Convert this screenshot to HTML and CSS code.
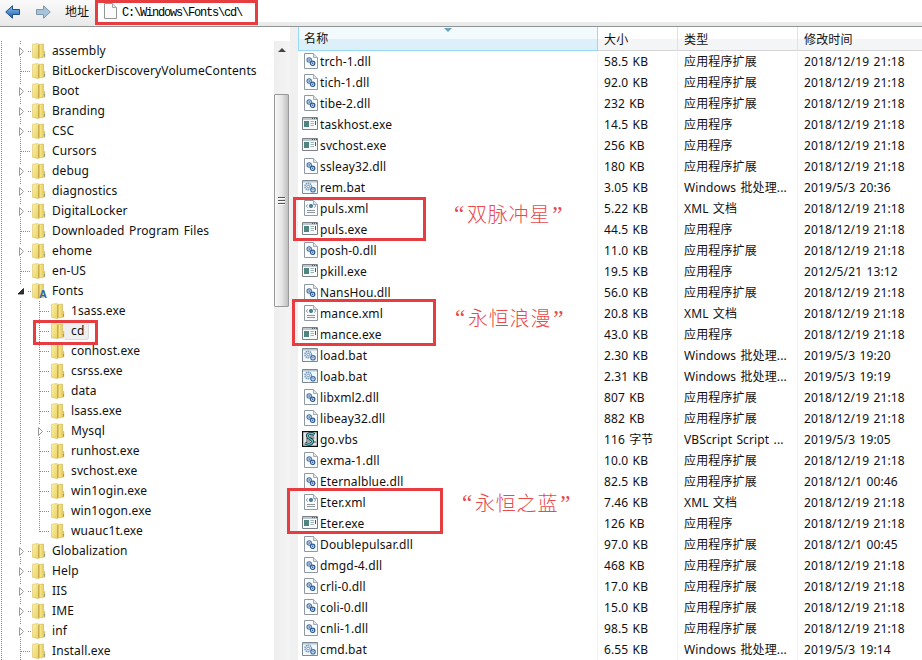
FILE: index.html
```html
<!DOCTYPE html>
<html lang="zh-CN">
<head>
<meta charset="utf-8">
<title>C:\Windows\Fonts\cd\</title>
<link rel="stylesheet" href="styles.css">
</head>
<body>
<svg class="defs" width="0" height="0">
  <defs>
    <linearGradient id="gold" x1="0" x2="1" y1="0" y2="0"><stop offset="0" stop-color="#d9bb52"/><stop offset=".35" stop-color="#f5e485"/><stop offset="1" stop-color="#dfc055"/></linearGradient>
    <linearGradient id="pale" x1="0" x2="1" y1="0" y2="1"><stop offset="0" stop-color="#fbf2a8"/><stop offset="1" stop-color="#e8cf60"/></linearGradient>
    <linearGradient id="blue" x1="0" x2="0" y1="0" y2="1"><stop offset="0" stop-color="#8cc0ee"/><stop offset="1" stop-color="#1c5fae"/></linearGradient>
    <symbol id="folder" viewBox="0 0 14 16"><path d="M6 1.500 11.500 1v6.500l1.300 1v5.500L6 15.300z" fill="url(#gold)" stroke="#cbae48" stroke-width=".5"/><path d="M.5 1.300 5.800.5l1.200 1v13.300l-1.500.7L.5 14.300z" fill="url(#pale)" stroke="#d3bb58" stroke-width=".5"/><path d="M6.700 2v12.800" stroke="#b99a3c" stroke-width=".8"/><path d="M12.500 11v2.500" stroke="#6f93ad" stroke-width=".8"/></symbol>
    <symbol id="dll" viewBox="0 0 14 16"><path d="M.5.500h9l4 4v11H.500z" fill="#fafcfd" stroke="#9099a1"/><path d="M9.500.500v4h4" fill="#dfe5e9" stroke="#a3adb5"/><circle cx="5.200" cy="7" r="2.200" fill="#d5e4f3" stroke="#4a719f" stroke-width="1.100"/><circle cx="5.200" cy="7" r=".8" fill="#315a90"/><circle cx="8.600" cy="10.300" r="2.200" fill="#d5e4f3" stroke="#2c5b96" stroke-width="1.200"/><circle cx="8.600" cy="10.300" r=".8" fill="#2c5b96"/></symbol>
    <symbol id="exe" viewBox="0 0 16 14"><path d="M.5.500h15v12H.500z" fill="#f8fafa" stroke="#7b8186"/><path d="M1 1h14v2H1z" fill="#bcc6cc"/><path d="M10 1.500h1m1 0h1m1 0h1" stroke="#4b5963"/><path d="M2 4h5v6H2z" fill="#4f8580"/><path d="M8.500 4.500H12M8.500 6.500H12M8.500 8.500H12" stroke="#9fb3b8"/><path d="M13.500 4v4" stroke="#3f5a66"/></symbol>
    <symbol id="bat" viewBox="0 0 16 14"><path d="M.5.500h15v13H.500z" fill="#f1f7fb" stroke="#7d8992"/><path d="M1 1h14v1.500H1z" fill="#b9c6cf"/><circle cx="6.200" cy="6.500" r="3.300" fill="#e2edf7" stroke="#6c94bd" stroke-width="1.300" stroke-dasharray="1.500 .6"/><circle cx="6.200" cy="6.500" r="1.400" fill="#fff" stroke="#6c94bd"/><circle cx="11" cy="9.800" r="2.200" fill="#e5eef7" stroke="#3f6fa3" stroke-width="1.200"/><circle cx="11" cy="9.800" r=".7" fill="#3f6fa3"/></symbol>
    <symbol id="xml" viewBox="0 0 14 16"><path d="M.5.500h9l4 4v11H.500z" fill="#fafcfd" stroke="#9099a1"/><path d="M9.500.500v4h4" fill="#dfe5e9" stroke="#a3adb5"/><path d="M3.800 4.500 2.200 6l1.600 1.500M10.200 4.500 11.800 6l-1.600 1.500" fill="none" stroke="#7d929f"/><circle cx="7" cy="6" r="2" fill="#336c8a"/><circle cx="7" cy="6" r=".6" fill="#9fd3ce"/><path d="M3 10.500h8M3 12.500h8" stroke="#8c969c"/></symbol>
    <symbol id="vbs" viewBox="0 0 16 16"><path d="M.6.600h14.800v14.800H.600z" fill="#e3e7e8" stroke="#111" stroke-width="1.200"/><path d="M5 2.500h8l-2 4 1 7H3.500l2-3.500z" fill="#f6f6f6"/><path d="M12.500 3.500C9 1.500 5 2.500 5.500 5.300S11.500 8 10.500 11 5.500 13.500 3 12" fill="none" stroke="#102f38" stroke-width="3"/><path d="M12.500 3.500C9 1.500 5 2.500 5.500 5.300S11.500 8 10.500 11 5.500 13.500 3 12" fill="none" stroke="#5cc3c9" stroke-width="1.400"/><path d="M8 5h4M8.500 7h4M4 10h4M12 11h2M4 8h2" stroke="#222" stroke-width=".8"/></symbol>
    <symbol id="leaf" viewBox="0 0 32 20"><path d="M20.500 0v20M21 10.500h10" class="dots"/></symbol>
    <symbol id="end" viewBox="0 0 32 20"><path d="M20.500 0v11M21 10.500h10" class="dots"/></symbol>
    <symbol id="shut" viewBox="0 0 32 20"><path d="M20.500 0v4M20.500 16v4M28 10.500h4" class="dots"/><path d="M19.500 6.500v8l4-4z" fill="#fff" stroke="#999"/></symbol>
    <symbol id="open" viewBox="0 0 32 20"><path d="M20.500 0v4M28 10.500h4" class="dots"/><path d="M23.500 7.500v5.500H18z" fill="#333" stroke="#111" stroke-width=".8"/></symbol>
  </defs>
</svg>

<header class="toolbar">
  <svg class="nav" width="16" height="14" viewBox="0 0 16 14"><path d="M7.500.800v3.700h7v5h-7v3.700L.700 7z" fill="url(#blue)" stroke="#1d4f8c"/></svg>
  <svg class="nav forward" width="16" height="14" viewBox="0 0 16 14"><path d="M8.500.800v3.700h-7v5h7v3.700L15.300 7z" fill="#a6c3dc" stroke="#8097ad"/></svg>
  <span class="caption">地址</span>
  <div class="address">
    <svg width="13" height="16" viewBox="0 0 13 16"><path d="M.5.500h8l4 4v11H.500z" fill="#fbfbfb" stroke="#969696"/><path d="M8.500.500v4h4" fill="#e5e5e5" stroke="#a5a5a5"/></svg>
    <span>C:\Windows\Fonts\cd\</span>
  </div>
</header>

<main class="panes">
  <nav class="tree">
    <ul>
      <li><svg class="g"><use href="#shut"/></svg><svg class="f"><use href="#folder"/></svg><span>assembly</span></li>
      <li><svg class="g"><use href="#leaf"/></svg><svg class="f"><use href="#folder"/></svg><span>BitLockerDiscoveryVolumeContents</span></li>
      <li><svg class="g"><use href="#shut"/></svg><svg class="f"><use href="#folder"/></svg><span>Boot</span></li>
      <li><svg class="g"><use href="#shut"/></svg><svg class="f"><use href="#folder"/></svg><span>Branding</span></li>
      <li><svg class="g"><use href="#shut"/></svg><svg class="f"><use href="#folder"/></svg><span>CSC</span></li>
      <li><svg class="g"><use href="#leaf"/></svg><svg class="f"><use href="#folder"/></svg><span>Cursors</span></li>
      <li><svg class="g"><use href="#shut"/></svg><svg class="f"><use href="#folder"/></svg><span>debug</span></li>
      <li><svg class="g"><use href="#shut"/></svg><svg class="f"><use href="#folder"/></svg><span>diagnostics</span></li>
      <li><svg class="g"><use href="#shut"/></svg><svg class="f"><use href="#folder"/></svg><span>DigitalLocker</span></li>
      <li><svg class="g"><use href="#leaf"/></svg><svg class="f"><use href="#folder"/></svg><span>Downloaded Program Files</span></li>
      <li><svg class="g"><use href="#shut"/></svg><svg class="f"><use href="#folder"/></svg><span>ehome</span></li>
      <li><svg class="g"><use href="#leaf"/></svg><svg class="f"><use href="#folder"/></svg><span>en-US</span></li>
      <li class="fonts"><svg class="g"><use href="#open"/></svg><svg class="f"><use href="#folder"/></svg><b class="mark">A</b><span>Fonts</span>
        <ul>
          <li><svg class="g"><use href="#leaf"/></svg><svg class="f"><use href="#folder"/></svg><span>1sass.exe</span></li>
          <li class="selected"><svg class="g"><use href="#leaf"/></svg><svg class="f"><use href="#folder"/></svg><span>cd</span></li>
          <li><svg class="g"><use href="#leaf"/></svg><svg class="f"><use href="#folder"/></svg><span>conhost.exe</span></li>
          <li><svg class="g"><use href="#leaf"/></svg><svg class="f"><use href="#folder"/></svg><span>csrss.exe</span></li>
          <li><svg class="g"><use href="#leaf"/></svg><svg class="f"><use href="#folder"/></svg><span>data</span></li>
          <li><svg class="g"><use href="#leaf"/></svg><svg class="f"><use href="#folder"/></svg><span>lsass.exe</span></li>
          <li><svg class="g"><use href="#shut"/></svg><svg class="f"><use href="#folder"/></svg><span>Mysql</span></li>
          <li><svg class="g"><use href="#leaf"/></svg><svg class="f"><use href="#folder"/></svg><span>runhost.exe</span></li>
          <li><svg class="g"><use href="#leaf"/></svg><svg class="f"><use href="#folder"/></svg><span>svchost.exe</span></li>
          <li><svg class="g"><use href="#leaf"/></svg><svg class="f"><use href="#folder"/></svg><span>win1ogin.exe</span></li>
          <li><svg class="g"><use href="#leaf"/></svg><svg class="f"><use href="#folder"/></svg><span>win1ogon.exe</span></li>
          <li><svg class="g"><use href="#end"/></svg><svg class="f"><use href="#folder"/></svg><span>wuauc1t.exe</span></li>
        </ul>
      </li>
      <li><svg class="g"><use href="#shut"/></svg><svg class="f"><use href="#folder"/></svg><span>Globalization</span></li>
      <li><svg class="g"><use href="#shut"/></svg><svg class="f"><use href="#folder"/></svg><span>Help</span></li>
      <li><svg class="g"><use href="#shut"/></svg><svg class="f"><use href="#folder"/></svg><span>IIS</span></li>
      <li><svg class="g"><use href="#shut"/></svg><svg class="f"><use href="#folder"/></svg><span>IME</span></li>
      <li><svg class="g"><use href="#shut"/></svg><svg class="f"><use href="#folder"/></svg><span>inf</span></li>
      <li><svg class="g"><use href="#leaf"/></svg><svg class="f"><use href="#folder"/></svg><span>Install.exe</span></li>
    </ul>
  </nav>
  <div class="scrollbar"><i class="up"></i><div class="thumb"><i></i><i></i><i></i></div></div>
  <div class="splitter"></div>
  <section class="list">
    <div class="row head"><div class="sorted">名称</div><div>大小</div><div>类型</div><div>修改时间</div></div>
    <div class="row"><div><svg class="doc"><use href="#dll"/></svg>trch-1.dll</div><div>58.5 KB</div><div>应用程序扩展</div><div>2018/12/19 21:18</div></div>
    <div class="row"><div><svg class="doc"><use href="#dll"/></svg>tich-1.dll</div><div>92.0 KB</div><div>应用程序扩展</div><div>2018/12/19 21:18</div></div>
    <div class="row"><div><svg class="doc"><use href="#dll"/></svg>tibe-2.dll</div><div>232 KB</div><div>应用程序扩展</div><div>2018/12/19 21:18</div></div>
    <div class="row"><div><svg class="win"><use href="#exe"/></svg>taskhost.exe</div><div>14.5 KB</div><div>应用程序</div><div>2018/12/19 21:18</div></div>
    <div class="row"><div><svg class="win"><use href="#exe"/></svg>svchost.exe</div><div>256 KB</div><div>应用程序</div><div>2018/12/19 21:18</div></div>
    <div class="row"><div><svg class="doc"><use href="#dll"/></svg>ssleay32.dll</div><div>180 KB</div><div>应用程序扩展</div><div>2018/12/19 21:18</div></div>
    <div class="row"><div><svg class="win"><use href="#bat"/></svg>rem.bat</div><div>3.05 KB</div><div>Windows 批处理...</div><div>2019/5/3 20:36</div></div>
    <div class="row"><div><svg class="doc"><use href="#xml"/></svg>puls.xml</div><div>5.22 KB</div><div>XML 文档</div><div>2018/12/19 21:18</div></div>
    <div class="row"><div><svg class="win"><use href="#exe"/></svg>puls.exe</div><div>44.5 KB</div><div>应用程序</div><div>2018/12/19 21:18</div></div>
    <div class="row"><div><svg class="doc"><use href="#dll"/></svg>posh-0.dll</div><div>11.0 KB</div><div>应用程序扩展</div><div>2018/12/19 21:18</div></div>
    <div class="row"><div><svg class="win"><use href="#exe"/></svg>pkill.exe</div><div>19.5 KB</div><div>应用程序</div><div>2012/5/21 13:12</div></div>
    <div class="row"><div><svg class="doc"><use href="#dll"/></svg>NansHou.dll</div><div>56.0 KB</div><div>应用程序扩展</div><div>2018/12/19 21:18</div></div>
    <div class="row"><div><svg class="doc"><use href="#xml"/></svg>mance.xml</div><div>20.8 KB</div><div>XML 文档</div><div>2018/12/19 21:18</div></div>
    <div class="row"><div><svg class="win"><use href="#exe"/></svg>mance.exe</div><div>43.0 KB</div><div>应用程序</div><div>2018/12/19 21:18</div></div>
    <div class="row"><div><svg class="win"><use href="#bat"/></svg>load.bat</div><div>2.30 KB</div><div>Windows 批处理...</div><div>2019/5/3 19:20</div></div>
    <div class="row"><div><svg class="win"><use href="#bat"/></svg>loab.bat</div><div>2.31 KB</div><div>Windows 批处理...</div><div>2019/5/3 19:19</div></div>
    <div class="row"><div><svg class="doc"><use href="#dll"/></svg>libxml2.dll</div><div>807 KB</div><div>应用程序扩展</div><div>2018/12/19 21:18</div></div>
    <div class="row"><div><svg class="doc"><use href="#dll"/></svg>libeay32.dll</div><div>882 KB</div><div>应用程序扩展</div><div>2018/12/19 21:18</div></div>
    <div class="row"><div><svg class="script"><use href="#vbs"/></svg>go.vbs</div><div>116 字节</div><div>VBScript Script ...</div><div>2019/5/3 19:05</div></div>
    <div class="row"><div><svg class="doc"><use href="#dll"/></svg>exma-1.dll</div><div>10.0 KB</div><div>应用程序扩展</div><div>2018/12/19 21:18</div></div>
    <div class="row"><div><svg class="doc"><use href="#dll"/></svg>Eternalblue.dll</div><div>82.5 KB</div><div>应用程序扩展</div><div>2018/12/1 00:46</div></div>
    <div class="row"><div><svg class="doc"><use href="#xml"/></svg>Eter.xml</div><div>7.46 KB</div><div>XML 文档</div><div>2018/12/19 21:18</div></div>
    <div class="row"><div><svg class="win"><use href="#exe"/></svg>Eter.exe</div><div>126 KB</div><div>应用程序</div><div>2018/12/19 21:18</div></div>
    <div class="row"><div><svg class="doc"><use href="#dll"/></svg>Doublepulsar.dll</div><div>97.0 KB</div><div>应用程序扩展</div><div>2018/12/1 00:45</div></div>
    <div class="row"><div><svg class="doc"><use href="#dll"/></svg>dmgd-4.dll</div><div>468 KB</div><div>应用程序扩展</div><div>2018/12/19 21:18</div></div>
    <div class="row"><div><svg class="doc"><use href="#dll"/></svg>crli-0.dll</div><div>17.0 KB</div><div>应用程序扩展</div><div>2018/12/19 21:18</div></div>
    <div class="row"><div><svg class="doc"><use href="#dll"/></svg>coli-0.dll</div><div>15.0 KB</div><div>应用程序扩展</div><div>2018/12/19 21:18</div></div>
    <div class="row"><div><svg class="doc"><use href="#dll"/></svg>cnli-1.dll</div><div>98.5 KB</div><div>应用程序扩展</div><div>2018/12/19 21:18</div></div>
    <div class="row"><div><svg class="win"><use href="#bat"/></svg>cmd.bat</div><div>6.55 KB</div><div>Windows 批处理...</div><div>2019/5/3 19:14</div></div>
  </section>
</main>

<div class="box box-path"></div>
<div class="box box-cd"></div>
<div class="box box-puls"></div>
<div class="box box-mance"></div>
<div class="box box-eter"></div>
<div class="note note-puls"><q>“</q>双脉冲星<q>”</q></div>
<div class="note note-mance"><q>“</q>永恒浪漫<q>”</q></div>
<div class="note note-eter"><q>“</q>永恒之蓝<q>”</q></div>
</body>
</html>
```
FILE: styles.css
```css
* { box-sizing: border-box; }
body {
  margin: 0;
  width: 922px;
  height: 660px;
  overflow: hidden;
  position: relative;
  background: #fff;
  color: #111;
  font: 12px/20px "Noto Sans", "Noto Sans CJK SC", sans-serif;
}
ul { list-style: none; margin: 0; padding: 0; }
.defs { position: absolute; }
.dots { stroke: #888; stroke-dasharray: 1 1; fill: none; }

.toolbar {
  display: flex;
  align-items: center;
  height: 27px;
  padding-left: 5px;
  background: linear-gradient(#fafafa, #e9e9e9);
  border-bottom: 1px solid #8f9494;
}
.nav { flex: none; margin-top: -3px; }
.forward { margin-left: 14px; }
.caption { margin: -2px 0 0 14px; width: 31px; }
.address {
  flex: 1;
  display: flex;
  align-items: center;
  height: 22px;
  margin-top: -4px;
  padding-left: 8px;
  background: #fff;
  color: #000;
}
.address span {
  margin: 3px 0 0 5px;
  font: 12px/16px "Liberation Mono", monospace;
  letter-spacing: -1.2px;
}

.panes { display: flex; height: 633px; }
.tree {
  width: 274px;
  margin-top: 14px;
  overflow: hidden;
  letter-spacing: .13px;
  word-spacing: 1.2px;
  background: repeating-linear-gradient(#888 0 1px, #fff 1px 2px) 1px 0 / 1px 100% no-repeat;
}
.tree li { display: flex; flex-wrap: wrap; height: 20px; white-space: nowrap; }
.tree .fonts { height: 260px; align-content: flex-start; }
.tree ul ul {
  width: 100%;
  padding-left: 19px;
  background: repeating-linear-gradient(#888 0 1px, #fff 1px 2px) 20px 0 / 1px 100% no-repeat;
}
.g { width: 32px; height: 20px; }
.f { width: 14px; height: 16px; margin-top: 2px; }
.tree span { margin-left: 6px; }
.mark {
  width: 9px;
  height: 15px;
  margin: 5px -2px 0 -7px;
  color: #2a66c0;
  font: bold 11px/16px "Liberation Sans", sans-serif;
}
.selected .f { background: #efefef; }
.tree .selected span {
  height: 18px;
  margin: 1px 0 0;
  padding: 0 4px 0 6px;
  border: solid #dcdcdc;
  border-width: 0 1px 1px 0;
  border-radius: 0 3px 3px 0;
  background: #efefef;
  line-height: 18px;
}

.scrollbar {
  width: 16px;
  margin-top: 14px;
  background: linear-gradient(90deg, #eee, #f4f4f4);
}
.up {
  display: block;
  width: 0;
  margin: 7px 0 0 4px;
  border: 4px solid transparent;
  border-top: 0;
  border-bottom-color: #444;
}
.thumb {
  display: flex;
  flex-direction: column;
  justify-content: center;
  align-items: center;
  gap: 1px;
  width: 15px;
  height: 213px;
  margin-top: 42px;
  border: 1px solid #999;
  border-radius: 1px;
  background: linear-gradient(90deg, #f8f8f8, #e6e6e6 50%, #bfbfbf);
}
.thumb i { width: 7px; height: 2px; border-top: 1px solid #555; background: #fff; }
.splitter { width: 8px; background: #f0f0f0; }

.list { width: 624px; white-space: nowrap; letter-spacing: .13px; word-spacing: 1px; }
.row {
  display: grid;
  grid-template-columns: 300px 80px 120px 124px;
  height: 21px;
  line-height: 21px;
}
.row > div { display: flex; align-items: center; padding-left: 6px; border-right: 1px solid #eef3f7; }
.row > div:first-child { padding-left: 4px; }
.row > div:last-child { border: 0; }
.head { height: 24px; border-bottom: 1px solid #d5d5d5; background: linear-gradient(#fff 50%, #f4f5f6 50%); }
.head > div { border-color: #dfe3e7; }
.row.head > .sorted {
  position: relative;
  padding-left: 5px;
  height: 24px;
  border: 1px solid #96d9f9;
  border-top: 0;
  background: linear-gradient(#f3fafe 50%, #dcf0f9 50%);
}
.sorted::after {
  content: "";
  position: absolute;
  left: 145px;
  top: 1px;
  border: 4px solid transparent;
  border-top-color: #69a1bf;
  border-bottom: 0;
}
.doc { width: 14px; height: 16px; margin: -1px 2px 0; }
.win { width: 16px; height: 14px; margin: -2px 2px 0 0; }
.script { width: 16px; height: 16px; margin: -2px 2px 0 0; }

.box { position: absolute; border: 3px solid #e73c40; }
.box-path { left: 95px; top: 0; width: 163px; height: 25px; }
.box-cd { left: 33px; top: 320px; width: 65px; height: 25px; }
.box-puls { left: 293px; top: 197px; width: 133px; height: 44px; }
.box-mance { left: 292px; top: 299px; width: 144px; height: 47px; }
.box-eter { left: 287px; top: 488px; width: 156px; height: 46px; }
.note {
  position: absolute;
  color: #e8494b;
  font: 300 20px/28px "Noto Sans CJK SC", sans-serif;
  letter-spacing: .8px;
  white-space: nowrap;
}
.note q { quotes: none; font-family: "Liberation Serif", serif; font-size: 23px; }
.note q:first-child { margin-right: 2px; }
.note q:last-child { margin-left: 2px; }
.note-puls { left: 454px; top: 200px; }
.note-mance { left: 455px; top: 304px; }
.note-eter { left: 462px; top: 489px; }
```
